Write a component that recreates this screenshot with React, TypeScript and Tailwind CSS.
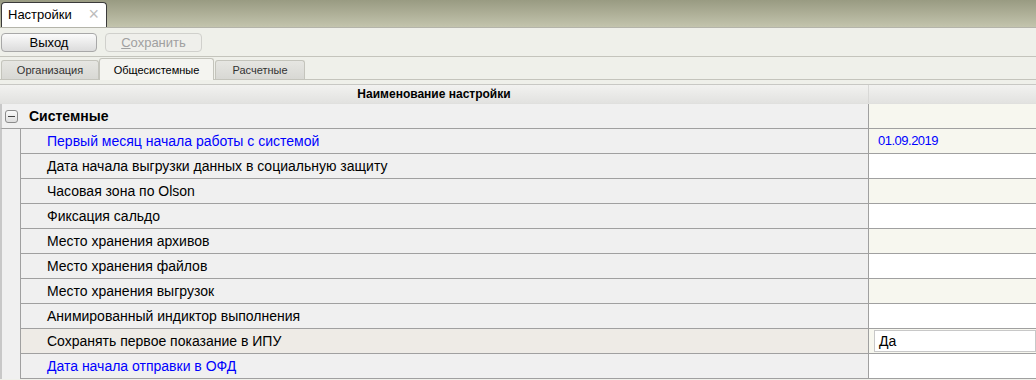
import React from 'react';

const rows = [
    { name: 'Первый месяц начала работы с системой', value: '01.09.2019', blue: true },
    { name: 'Дата начала выгрузки данных в социальную защиту' },
    { name: 'Часовая зона по Olson' },
    { name: 'Фиксация сальдо' },
    { name: 'Место хранения архивов' },
    { name: 'Место хранения файлов' },
    { name: 'Место хранения выгрузок' },
    { name: 'Анимированный индиктор выполнения' },
    { name: 'Сохранять первое показание в ИПУ', input: 'Да', selected: true },
    { name: 'Дата начала отправки в ОФД', blue: true },
];

const App: React.FC = () => {
    return (
        <div className="w-[1036px] h-[380px] overflow-hidden bg-[#eff0ea] text-black font-['Liberation_Sans',Arial,sans-serif]">
            {/* Window tab strip */}
            <div className="h-[28px] bg-gradient-to-b from-[#999b82] to-[#c3c4ad] border-b border-[#b4b4aa] flex items-end pl-[1px]">
                <div className="h-[25px] w-[106px] bg-white border border-[#3a3a3a] border-b-0 rounded-t-[4px] flex items-center justify-between pl-[6px] pr-[7px]">
                    <span className="text-[13px]">Настройки</span>
                    <span className="text-[18px] text-[#bcbcbc] leading-none -mt-[2px]">×</span>
                </div>
            </div>

            {/* Toolbar */}
            <div className="h-[29px] border-b border-[#c4c4bc] flex items-center gap-[8px] pl-[1px] pt-[1px]">
                <button className="w-[96px] h-[19px] rounded-[4px] border border-[#a8a8a8] bg-gradient-to-b from-[#fbfbfb] to-[#dcdcdc] text-[13px] leading-none">
                    Выход
                </button>
                <button className="w-[97px] h-[19px] rounded-[4px] border border-[#d0d0cc] bg-[#efefeb] text-[13px] leading-none text-[#a0a0a0]">
                    <span className="underline">С</span>охранить
                </button>
            </div>

            {/* Page tabs */}
            <div className="h-[23px] flex items-end border-b border-[#c4c4bc]">
                <div className="w-[98px] h-[19px] ml-[1px] rounded-t-[3px] border border-b-0 border-[#c4c4bc] bg-gradient-to-b from-[#e6e6e2] to-[#d8d8d4] text-[11px] text-[#333] flex items-center justify-center">
                    Организация
                </div>
                <div className="w-[115px] h-[22px] -mb-[1px] rounded-t-[3px] border border-b-0 border-[#c4c4bc] bg-[#f4f4f0] text-[11px] flex items-start pt-[3px] justify-center">
                    Общесистемные
                </div>
                <div className="w-[90px] h-[19px] ml-[1px] rounded-t-[3px] border border-b-0 border-[#c4c4bc] bg-gradient-to-b from-[#e6e6e2] to-[#d8d8d4] text-[11px] text-[#333] flex items-center justify-center">
                    Расчетные
                </div>
            </div>

            {/* Grid */}
            <div className="mt-[4px] border-t border-[#c8c8c4] bg-[#f0f0f0]">
                <div className="h-[19px] flex bg-gradient-to-b from-[#f2f2f0] to-[#e2e2e0] border-b border-[#e0e0de]">
                    <div className="w-[868px] flex items-center justify-center text-[12px] font-bold">
                        Наименование настройки
                    </div>
                    <div className="flex-1 border-l border-[#d8d8d6]" />
                </div>

                <div className="h-[25px] flex border-b border-[#a0a0a0] border-l-2 border-l-[#c8c8c8]">
                    <div className="w-[866px] flex items-center">
                        <div className="w-[13px] h-[13px] ml-[3px] rounded-[3px] border border-[#8c8c8c] bg-gradient-to-b from-[#fafafa] to-[#dedede] flex items-center justify-center">
                            <div className="w-[7px] h-[1px] bg-[#444]" />
                        </div>
                        <span className="ml-[11px] text-[14px] font-bold">Системные</span>
                    </div>
                    <div className="flex-1 border-l border-[#a0a0a0] bg-[#f7f7ef]" />
                </div>

                {rows.map((r, i) => (
                    <div key={i} className="h-[25px] flex border-l-2 border-l-[#c8c8c8]">
                        <div className="w-[18px] shrink-0" />
                        <div className={`w-[848px] flex items-center border-l border-b border-[#a0a0a0] pl-[26px] text-[14px] ${r.selected ? 'bg-[#eeebe6]' : ''} ${r.blue ? 'text-[#0000ff]' : ''}`}>
                            {r.name}
                        </div>
                        <div className={`flex-1 border-l border-b border-[#a0a0a0] flex items-center ${i % 2 === 0 ? 'bg-[#f7f7ef]' : 'bg-white'}`}>
                            {r.value && <span className="pl-[9px] text-[13px] tracking-[-0.5px] text-[#0000ff]">{r.value}</span>}
                            {r.input && (
                                <div className="ml-[5px] h-[22px] flex-1 bg-white border border-[#c8c8c8] flex items-center pl-[4px] text-[14px]">
                                    {r.input}
                                </div>
                            )}
                        </div>
                    </div>
                ))}
            </div>
        </div>
    );
};

export default App;
